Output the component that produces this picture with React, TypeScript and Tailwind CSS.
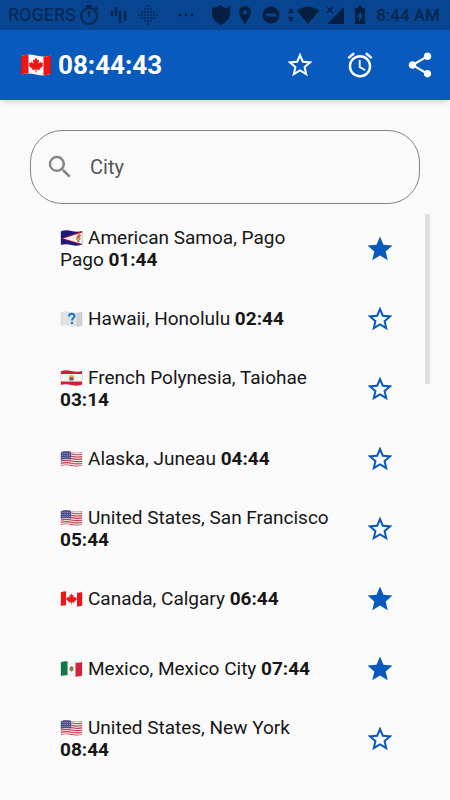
import { useId, useState, type ReactNode } from "react"
import { MdAccessAlarm, MdSearch, MdShare, MdStar, MdStarBorder } from "react-icons/md"

type FlagCode = "as" | "unknown" | "pf" | "us" | "ca" | "mx"

const stripes = [0, 1, 2, 3, 4, 5, 6]

const flagArt: Record<FlagCode, ReactNode> = {
    as: (
        <>
            <rect width="44" height="32" fill="#1d1a78" />
            <path d="M1 17 44 2v28z" fill="#c01f45" />
            <path d="M6 17 44 5v23z" fill="#f7f5f6" />
            <path d="M32 14l3-5 4-1 2 3-2 4 2 3-3 2-1 5-4-2 1-4-3 1z" fill="#b5763f" />
            <path d="M33 18l4-3 1 3-3 3z" fill="#e9b63a" />
        </>
    ),
    unknown: (
        <>
            <rect width="44" height="32" fill="#dfe3e6" />
            <path d="M32 0h12v32H32z" fill="#cdd1d4" />
            <path d="M17 11c0-7 11-7 11-1 0 4-5 4-5 9" fill="none" stroke="#1976c5" strokeWidth="4" />
            <circle cx="23" cy="24" r="2.4" fill="#1976c5" />
        </>
    ),
    pf: (
        <>
            <rect width="44" height="32" fill="#d21f38" />
            <rect y="8" width="44" height="15" fill="#f5f4f4" />
            <circle cx="22" cy="15.5" r="5.5" fill="#e9a25c" />
            <path d="M16.500 18h11c-2 4-9 4-11 0z" fill="#4b6db5" />
            <path d="M19 15h6v3h-6z" fill="#a6332f" />
        </>
    ),
    us: (
        <>
            <rect width="44" height="32" fill="#f1e9eb" />
            {stripes.map((i) => (
                <path
                    key={i}
                    d={`M0 ${i * 4.6 + 2}q11-3 22-.5t22 .5`}
                    fill="none"
                    stroke="#c4404f"
                    strokeWidth="2.3"
                />
            ))}
            <path d="M0 0h21v17q-11-2-21 1z" fill="#49508f" />
            <path d="M3 5h16M3 9h16M3 13h16" stroke="#c9cbe2" strokeWidth="1.3" strokeDasharray="1.5 2" />
        </>
    ),
    ca: (
        <>
            <rect width="44" height="32" fill="#f8f6f6" />
            <path d="M0 0h11v32H0zM33 0h11v32H33z" fill="#ef1517" />
            <path
                d="M22 5l2.2 4 2.3-1-.8 6 3-2.6.8 1.8 3-.4-1 3.2 1.3 1-5.6 4.5.4 1.8-5-.7V27h-1.2v-4.4l-5 .7.4-1.8-5.6-4.5 1.3-1-1-3.2 3 .4.8-1.8 3 2.6-.8-6 2.3 1z"
                fill="#ef1517"
            />
        </>
    ),
    mx: (
        <>
            <rect width="44" height="32" fill="#f4f3f1" />
            <path d="M0 0h14v32H0z" fill="#11784b" />
            <path d="M30 0h14v32H30z" fill="#ce2540" />
            <path d="M19 12l4-2 3 4-1 5-4 1-3-3z" fill="#8e7447" />
            <path d="M18 18q4 5 8 0" fill="none" stroke="#6f9a62" strokeWidth="1.5" />
        </>
    ),
}

function Flag({ code, className }: { code: FlagCode; className: string }) {
    const clipId = useId()
    return (
        <svg viewBox="0 0 44 32" className={className} aria-hidden="true">
            <clipPath id={clipId}>
                <path d="M0 3Q10-1 22 2T44 2V29Q34 33 22 30T0 30z" />
            </clipPath>
            <g clipPath={`url(#${clipId})`}>
                {flagArt[code]}
                <path d="M0 0h1.5v32H0zM42.5 0H44v32h-1.5z" fill="#000" opacity=".15" />
            </g>
        </svg>
    )
}

// Dots of the diamond-shaped notification icon
const diamondDots = [-3, -2, -1, 0, 1, 2, 3].flatMap((row) =>
    [-3, -2, -1, 0, 1, 2, 3]
        .filter((col) => Math.abs(row) + Math.abs(col) <= 3)
        .map((col) => ({ x: 71 + col * 3, y: 15 + row * 3 }))
)

function StatusBar() {
    return (
        <div className="flex h-[30px] items-center bg-[#084590] pr-2.5 pl-2 leading-[22px] whitespace-nowrap text-[#04264f]">
            <span className="text-[18px]">ROGERS</span>
            {/* Notification icons */}
            <svg viewBox="0 0 120 30" className="ml-px h-[30px] w-[120px] shrink-0" aria-hidden="true">
                <g fill="none" stroke="#04264f" strokeWidth="2">
                    <circle cx="12" cy="16" r="8" />
                    <path d="M9 6h6M12 11v6M18 7l3 3" />
                    <path d="M35 11v5M39 7v9M43 11v12M48 11v10" strokeWidth="2.4" />
                </g>
                <g fill="#04264f">
                    {diamondDots.map((dot) => (
                        <circle key={`${dot.x}-${dot.y}`} cx={dot.x} cy={dot.y} r=".9" />
                    ))}
                </g>
                <g fill="#04182f">
                    <circle cx="103" cy="15" r="1.2" />
                    <circle cx="109" cy="15" r="1.2" />
                    <circle cx="115" cy="15" r="1.2" />
                </g>
            </svg>
            {/* System icons */}
            <svg viewBox="0 0 160 30" className="ml-auto h-[30px] w-[160px] shrink-0" aria-hidden="true">
                <g fill="#051f42">
                    <path d="M11 5q3 4 6 3l4-3-1 5c1 8-3 12-9 15C5 22 1 18 2 8q5 0 9-3z" />
                    <path
                        fillRule="evenodd"
                        d="M35 6a6 6 0 0 0-6 6c0 4 6 12 6 12s6-8 6-12a6 6 0 0 0-6-6zm0 4a2.200 2.200 0 1 1 0 4.400a2.200 2.200 0 0 1 0-4.400z"
                    />
                    <path
                        fillRule="evenodd"
                        d="M61 6.500a8.500 8.500 0 1 0 0 17a8.500 8.500 0 0 0 0-17zm-5 7h10v3H56z"
                    />
                    <path d="M81 8l3 5h-6zM81 22l3-5h-6z" />
                    <path d="M87 11q11-9 22 0L98 24z" />
                    <path d="M134 7v17h-17z" />
                    <path fillRule="evenodd" d="M145 8h3V6h4v2h3v16h-10zm6 3l-4 6h2v5l4-7h-2z" />
                </g>
                <path d="M117 7l6 6M123 7l-6 6" stroke="#051f42" strokeWidth="1.2" />
            </svg>
            <time className="ml-1.5 text-[17px] font-medium">8:44 AM</time>
        </div>
    )
}

const initialCities = [
    { flag: "as", name: "American Samoa, Pago Pago", time: "01:44", starred: true },
    { flag: "unknown", name: "Hawaii, Honolulu", time: "02:44", starred: false },
    { flag: "pf", name: "French Polynesia, Taiohae", time: "03:14", starred: false },
    { flag: "us", name: "Alaska, Juneau", time: "04:44", starred: false },
    { flag: "us", name: "United States, San Francisco", time: "05:44", starred: false },
    { flag: "ca", name: "Canada, Calgary", time: "06:44", starred: true },
    { flag: "mx", name: "Mexico, Mexico City", time: "07:44", starred: true },
    { flag: "us", name: "United States, New York", time: "08:44", starred: false },
] satisfies { flag: FlagCode; name: string; time: string; starred: boolean }[]

export default function App() {
    const [cities, setCities] = useState(initialCities)

    const toggleStar = (name: string) =>
        setCities(cities.map((c) => (c.name === name ? { ...c, starred: !c.starred } : c)))

    return (
        <div className="min-h-screen bg-[#fafafa] font-[Roboto,sans-serif] text-[#161616]">
            <StatusBar />

            <header className="flex h-[70px] items-center bg-[#085abc] pl-[21px] text-white shadow-md">
                <Flag code="ca" className="mr-[7px] h-[22px] w-[30px]" />
                <h1 className="text-[26px] leading-8 font-bold">08:44:43</h1>
                <div className="ml-auto flex">
                    <button aria-label="Favourites" className="flex size-[60px] items-center justify-center">
                        <MdStarBorder size={30} />
                    </button>
                    <button aria-label="Alarm" className="flex size-[60px] items-center justify-center">
                        <MdAccessAlarm size={30} />
                    </button>
                    <button aria-label="Share" className="flex size-[60px] items-center justify-center">
                        <MdShare size={30} />
                    </button>
                </div>
            </header>

            <main>
                <div className="px-[30px] pt-[30px] pb-2.5">
                    <label className="flex h-[74px] items-center rounded-[32px] border border-[#858585] pr-6 pl-3.5">
                        <MdSearch size={30} className="shrink-0 text-[#858585]" />
                        <input
                            type="text"
                            placeholder="City"
                            aria-label="City"
                            className="ml-[15px] min-w-0 flex-1 bg-transparent text-[20px] leading-6 outline-none placeholder:text-[#555555]"
                        />
                    </label>
                </div>

                <div className="flex items-start pr-5">
                    <ul className="flex-1">
                        {cities.map((city) => (
                            <li key={city.name} className="flex min-h-[70px] items-center pl-[60px]">
                                <p className="flex-1 text-[19px] leading-[22px]">
                                    <Flag code={city.flag} className="mr-[5px] inline-block h-4 w-[23px] align-[-2px]" />
                                    {city.name} <b>{city.time}</b>
                                </p>
                                <button
                                    aria-label={`Favourite ${city.name}`}
                                    aria-pressed={city.starred}
                                    onClick={() => toggleStar(city.name)}
                                    className="mr-[15px] ml-5 flex size-[60px] shrink-0 items-center justify-center text-[#085abc]"
                                >
                                    {city.starred ? <MdStar size={30} /> : <MdStarBorder size={30} />}
                                </button>
                            </li>
                        ))}
                    </ul>
                    {/* Scroll thumb */}
                    <div className="h-[170px] w-[5px] bg-[#dfdfdf]" />
                </div>
            </main>
        </div>
    )
}
